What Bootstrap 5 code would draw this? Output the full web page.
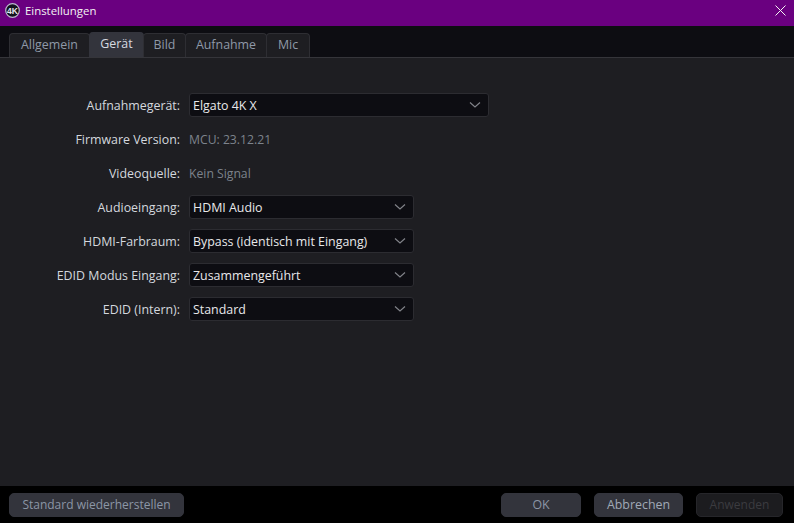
<!DOCTYPE html>
<html lang="de">
<head>
<meta charset="utf-8">
<title>Einstellungen</title>
<link href="https://cdn.jsdelivr.net/npm/bootstrap@5.3.0/dist/css/bootstrap.min.css" rel="stylesheet">
<style>
html,body{height:100%;margin:0;background:#000;overflow:hidden}
body{font-family:"Open Sans","Noto Sans",sans-serif;font-size:12.4px;color:#d4d8de}
.app-win{width:794px;height:523px}
.title-bar{height:26px;background:#6a0080;color:#f2f2f2;padding:0 8px 5px 5px;flex:none}
.title-txt{margin-left:5px;font-size:11.4px}
.tab-strip{height:32px;background:#0d0d12;border-bottom:1px solid #35353a;padding:7px 0 0 9px;flex:none;align-items:flex-end}
.tab-item{height:24px;background:#1e1e22;border:1px solid #2e2e33;border-bottom:0;border-radius:4px 4px 0 0;color:#8f99a8;display:flex;align-items:center;justify-content:center;margin-right:-1px}
.tab-on{height:25px;background:#33343c;color:#d6dae0;border-color:#33343c;padding-bottom:2px}
.settings-pane{flex:1 1 auto;background:#1e1e22;padding-top:35px}
.set-row{height:24px;margin-bottom:10px}
.set-label{width:180px;text-align:right;margin-right:9px;flex:none;color:#d4d8de;padding-top:2px}
.set-value{color:#7d838c;font-size:12.2px;padding-top:2px}
.set-pick.form-select{height:24px;width:225px;min-height:0;background-color:#0d0d12;border:1px solid #2c2c31;border-radius:3px;color:#e8e8ea;font-size:12.4px;padding:2px 24px 0 3px;line-height:20px;box-shadow:none;background-size:14px 8px;background-position:right 6px center;background-image:url("data:image/svg+xml,%3Csvg xmlns='http://www.w3.org/2000/svg' viewBox='0 0 14 8'%3E%3Cpath d='M2 1.5l5 4.5 5-4.5' fill='none' stroke='%23808288' stroke-width='1.2'/%3E%3C/svg%3E")}
.set-pick.pick-wide{width:300px}
.foot-bar{height:37px;background:#000;flex:none;padding:7px 11px 6px 9px}
.foot-btn.btn{height:24px;padding:0;font-size:12.4px;line-height:22px;background:#33343c;border:1px solid #33343c;border-radius:5px;color:#8c96a6}
.foot-btn.btn-off{background:#1c1c1f;border-color:#26262a;color:#3b3b3f;opacity:1;font-size:12px}
.w-std{width:175px}.foot-btn.btn.w-std{font-size:12px}.w-ok{width:80px;margin-right:13px}.w-abb{width:89px;margin-right:13px}.w-anw{width:87px}
.foot-btn.btn.w-abb{color:#a0a9b6}
</style>
</head>
<body>
<div class="app-win d-flex flex-column">
  <div class="title-bar d-flex align-items-center">
    <svg width="15" height="15" viewBox="0 0 15 15" aria-hidden="true"><circle cx="7.5" cy="7.5" r="6.8" fill="#12121c" stroke="#b9b9cc" stroke-width="1.2"/><text x="7.5" y="10.6" text-anchor="middle" font-family="Liberation Sans,sans-serif" font-weight="700" font-size="8.5" fill="#e8e8f0">4K</text></svg>
    <span class="title-txt">Einstellungen</span>
    <svg class="ms-auto" width="11" height="11" viewBox="0 0 11 11" aria-hidden="true"><path d="M.5.5l10 10M10.5.5l-10 10" stroke="#f4f4f4" stroke-width="1"/></svg>
  </div>
  <div class="tab-strip d-flex">
    <div class="tab-item" style="width:81px">Allgemein</div>
    <div class="tab-item tab-on" style="width:55px">Gerät</div>
    <div class="tab-item" style="width:43px">Bild</div>
    <div class="tab-item" style="width:82px">Aufnahme</div>
    <div class="tab-item" style="width:44px">Mic</div>
  </div>
  <div class="settings-pane">
    <div class="set-row d-flex align-items-center"><div class="set-label">Aufnahmegerät:</div><select class="form-select set-pick pick-wide"><option>Elgato 4K X</option></select></div>
    <div class="set-row d-flex align-items-center"><div class="set-label">Firmware Version:</div><div class="set-value">MCU: 23.12.21</div></div>
    <div class="set-row d-flex align-items-center"><div class="set-label">Videoquelle:</div><div class="set-value">Kein Signal</div></div>
    <div class="set-row d-flex align-items-center"><div class="set-label">Audioeingang:</div><select class="form-select set-pick"><option>HDMI Audio</option></select></div>
    <div class="set-row d-flex align-items-center"><div class="set-label">HDMI-Farbraum:</div><select class="form-select set-pick"><option>Bypass (identisch mit Eingang)</option></select></div>
    <div class="set-row d-flex align-items-center"><div class="set-label">EDID Modus Eingang:</div><select class="form-select set-pick"><option>Zusammengeführt</option></select></div>
    <div class="set-row d-flex align-items-center"><div class="set-label">EDID (Intern):</div><select class="form-select set-pick"><option>Standard</option></select></div>
  </div>
  <div class="foot-bar d-flex">
    <button type="button" class="btn foot-btn w-std">Standard wiederherstellen</button>
    <button type="button" class="btn foot-btn w-ok ms-auto">OK</button>
    <button type="button" class="btn foot-btn w-abb">Abbrechen</button>
    <button type="button" class="btn foot-btn btn-off w-anw" disabled>Anwenden</button>
  </div>
</div>
</body>
</html>
